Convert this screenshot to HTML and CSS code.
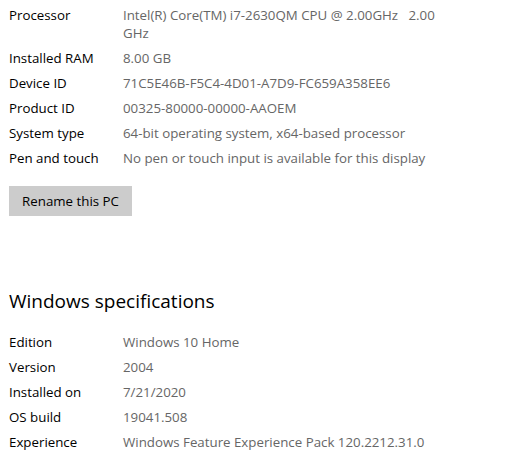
FILE: index.html
```html
<!DOCTYPE html>
<html lang="en">
<head>
<meta charset="utf-8">
<title>About</title>
<link rel="stylesheet" href="styles.css">
</head>
<body>
<div class="page">
  <dl class="specs">
    <div class="row"><dt>Processor</dt><dd>Intel(R) Core(TM) i7-2630QM CPU @ 2.00GHz&nbsp;&nbsp; 2.00<br>GHz</dd></div>
    <div class="row"><dt>Installed RAM</dt><dd>8.00 GB</dd></div>
    <div class="row"><dt>Device ID</dt><dd>71C5E46B-F5C4-4D01-A7D9-FC659A358EE6</dd></div>
    <div class="row"><dt>Product ID</dt><dd>00325-80000-00000-AAOEM</dd></div>
    <div class="row"><dt>System type</dt><dd>64-bit operating system, x64-based processor</dd></div>
    <div class="row"><dt>Pen and touch</dt><dd>No pen or touch input is available for this display</dd></div>
  </dl>
  <button class="btn" type="button">Rename this PC</button>

  <h2 class="heading">Windows specifications</h2>
  <dl class="specs">
    <div class="row"><dt>Edition</dt><dd>Windows 10 Home</dd></div>
    <div class="row"><dt>Version</dt><dd>2004</dd></div>
    <div class="row"><dt>Installed on</dt><dd>7/21/2020</dd></div>
    <div class="row"><dt>OS build</dt><dd>19041.508</dd></div>
    <div class="row"><dt>Experience</dt><dd>Windows Feature Experience Pack 120.2212.31.0</dd></div>
  </dl>
</div>
</body>
</html>
```
FILE: styles.css
```css
html, body {
  margin: 0;
  padding: 0;
  background: #ffffff;
}
body {
  font-family: "Open Sans", "Noto Sans", "DejaVu Sans", sans-serif;
  font-size: 13.3px;
  color: #000000;
}
.page {
  padding: 6px 9px 0 9px;
}
.specs {
  margin: 0;
  display: flex;
  flex-direction: column;
  gap: 7px;
}
.row {
  display: flex;
  line-height: 18px;
}
.row dt {
  width: 114px;
  flex: none;
  color: #000000;
}
.row dd {
  margin: 0;
  color: #666666;
}
.btn {
  display: block;
  margin-top: 19px;
  width: 123px;
  height: 30px;
  border: none;
  background: #cccccc;
  color: #000000;
  font-family: inherit;
  font-size: 13.3px;
  padding: 0;
}
.heading {
  margin: 72px 0 0 0;
  font-size: 19px;
  font-weight: 400;
  line-height: 26px;
  color: #000000;
}
.heading + .specs {
  margin-top: 19px;
}
```
